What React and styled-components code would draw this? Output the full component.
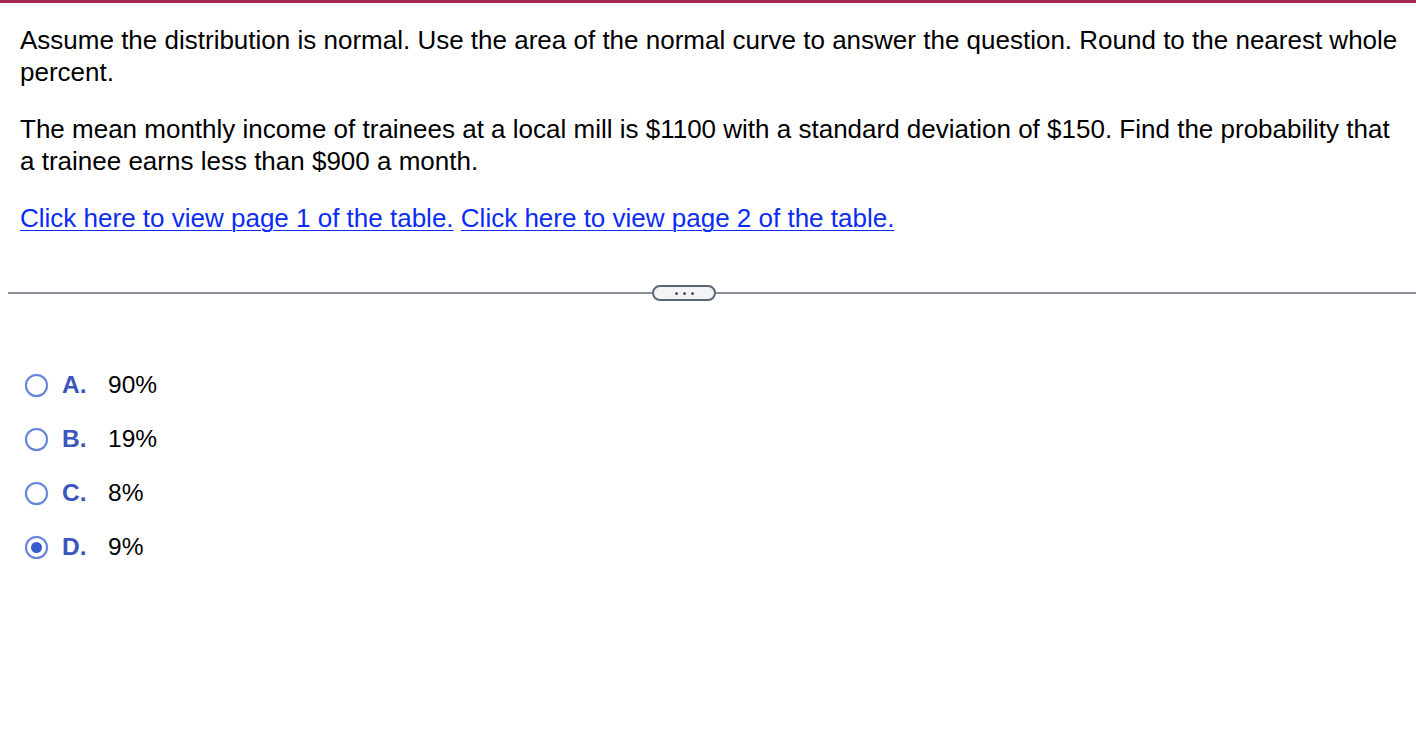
import React from "react";
import styled, { createGlobalStyle } from "styled-components";

const Global = createGlobalStyle`
  html, body { margin: 0; padding: 0; background: #fff; }
  body { font-family: "Liberation Sans", Arial, sans-serif; color: #000; }
`;

const Page = styled.div`
  width: 1416px;
  height: 756px;
  border-top: 3px solid #a52a52;
  box-sizing: border-box;
  overflow: hidden;
`;

const Question = styled.div`
  padding: 21px 14px 0 20px;
  font-size: 26px;
  line-height: 32px;
`;

const Para = styled.p`
  margin: 0 0 25px 0;
`;

const Link = styled.a`
  color: #0a2cf5;
  text-decoration: underline;
  text-decoration-thickness: 1px;
  text-underline-offset: 3px;
  cursor: pointer;
`;

const Divider = styled.div`
  margin: 51px 0 0 8px;
  display: flex;
  align-items: center;
  height: 16px;
`;

const Rule = styled.div`
  height: 2px;
  background: #8a919c;
  flex: ${(p) => (p.$grow ? 1 : "none")};
  width: ${(p) => (p.$w ? p.$w + "px" : "auto")};
`;

const Pill = styled.div`
  width: 60px;
  height: 12px;
  border: 2px solid #5b6675;
  border-radius: 8px;
  background: #f3f4f6;
  display: flex;
  align-items: center;
  justify-content: center;
  gap: 5px;
`;

const Dot = styled.span`
  width: 3px;
  height: 3px;
  border-radius: 50%;
  background: #4a5260;
`;

const Options = styled.div`
  margin-top: 70px;
  padding-left: 25px;
  display: flex;
  flex-direction: column;
  gap: 26px;
`;

const Option = styled.label`
  display: flex;
  align-items: center;
  height: 28px;
  font-size: 24.5px;
`;

const Radio = styled.span`
  width: 19px;
  height: 19px;
  border: 2px solid #6283d8;
  border-radius: 50%;
  box-sizing: content-box;
  display: flex;
  align-items: center;
  justify-content: center;
  box-shadow: 0 0 1px #9fb3ea;
  flex: none;
`;

const Inner = styled.span`
  width: 11px;
  height: 11px;
  border-radius: 50%;
  background: #3a5bd0;
`;

const Letter = styled.span`
  margin-left: 14px;
  width: 46px;
  font-weight: bold;
  color: #3c55bd;
`;

const Value = styled.span``;

const options = [
  ["A.", "90%", false],
  ["B.", "19%", false],
  ["C.", "8%", false],
  ["D.", "9%", true],
];

export default function App() {
  return (
    <Page>
      <Global />
      <Question>
        <Para>
          Assume the distribution is normal. Use the area of the normal curve to answer the question. Round to the nearest whole percent.
        </Para>
        <Para>
          The mean monthly income of trainees at a local mill is $1100 with a standard deviation of $150. Find the probability that a trainee earns less than $900 a month.
        </Para>
        <Para>
          <Link>Click here to view page 1 of the table.</Link> <Link>Click here to view page 2 of the table.</Link>
        </Para>
      </Question>
      <Divider>
        <Rule $w={644} />
        <Pill>
          <Dot />
          <Dot />
          <Dot />
        </Pill>
        <Rule $grow />
      </Divider>
      <Options>
        {options.map(([l, v, sel]) => (
          <Option key={l}>
            <Radio>{sel && <Inner />}</Radio>
            <Letter>{l}</Letter>
            <Value>{v}</Value>
          </Option>
        ))}
      </Options>
    </Page>
  );
}
